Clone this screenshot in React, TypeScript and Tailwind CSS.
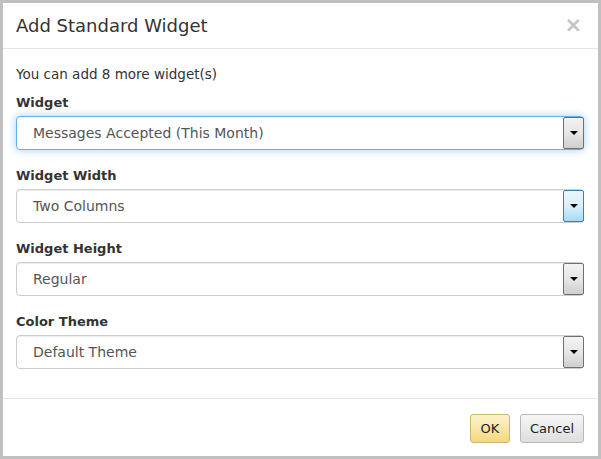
import { useState } from "react";

const fieldLabels = [
  { label: "Widget", value: "Messages Accepted (This Month)", state: "focus" },
  { label: "Widget Width", value: "Two Columns", state: "hover" },
  { label: "Widget Height", value: "Regular", state: "normal" },
  { label: "Color Theme", value: "Default Theme", state: "normal" },
];

function ArrowButton({ hover }: { hover: boolean }) {
  return (
    <div
      className={`flex h-full w-[21px] shrink-0 items-center justify-center rounded-[2px] border ${
        hover
          ? "border-[#3c7fb1] bg-gradient-to-b from-[#eaf6fd] via-[#d9f0fc] to-[#a7d9f5]"
          : "border-[#707070] bg-gradient-to-b from-[#f3f3f3] via-[#e6e6e6] to-[#cfcfcf]"
      }`}
    >
      <svg width="8" height="4" viewBox="0 0 8 4">
        <path d="M0 0h8L4 4z" fill="#000" />
      </svg>
    </div>
  );
}

function FakeSelect({ value, state }: { value: string; state: string }) {
  const focused = state === "focus";
  return (
    <div
      className={`flex h-[34px] items-center rounded-[4px] border bg-white ${
        focused
          ? "border-[#66afe9] shadow-[0_0_8px_rgba(102,175,233,0.6)]"
          : "border-[#cccccc] shadow-[inset_0_1px_1px_rgba(0,0,0,0.075)]"
      }`}
    >
      <span className="flex-1 pl-[16px] text-[14px] text-[#555555]">{value}</span>
      <div className="h-[32px] -mr-px">
        <ArrowButton hover={state === "hover"} />
      </div>
    </div>
  );
}

export default function App() {
  const [open] = useState(true);
  if (!open) return null;

  return (
    <div
      className="flex h-[459px] w-[601px] flex-col border-[3px] border-[#c0c0c0] bg-white text-[#333333]"
      style={{ fontFamily: "'DejaVu Sans', Verdana, sans-serif" }}
    >
      <header className="flex h-[46px] shrink-0 items-center justify-between border-b border-[#e5e5e5] pl-[13px] pr-[16px]">
        <h1 className="text-[18px] leading-none">Add Standard Widget</h1>
        <button className="text-[21px] font-bold leading-none text-[#c4c4c4]">×</button>
      </header>

      <main className="flex-1 border-b border-[#e5e5e5] pl-[13px] pr-[14px] pt-[15px]">
        <p className="mb-[9px] text-[13.5px] leading-[20px]">You can add 8 more widget(s)</p>
        {fieldLabels.map((f) => (
          <div key={f.label} className="mb-[16px]">
            <label className="mb-[3px] block text-[13px] font-bold leading-[20px] text-[#333333]">
              {f.label}
            </label>
            <FakeSelect value={f.value} state={f.state} />
          </div>
        ))}
      </main>

      <footer className="flex h-[57px] shrink-0 items-start justify-end gap-[10px] pr-[14px] pt-[15px]">
        <button className="h-[29px] w-[40px] rounded-[3px] border border-[#c8b870] bg-gradient-to-b from-[#fdf3cc] to-[#f5d87e] text-[13px] text-[#222222]">
          OK
        </button>
        <button className="h-[29px] w-[64px] rounded-[3px] border border-[#b8b8b8] bg-gradient-to-b from-[#f6f6f6] to-[#dedede] text-[13px] text-[#222222]">
          Cancel
        </button>
      </footer>
    </div>
  );
}
